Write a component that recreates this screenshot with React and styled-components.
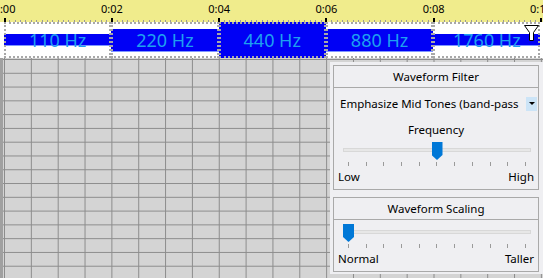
import styled, { createGlobalStyle } from "styled-components";

const TICK = 107.3;
const BLUE = "#0000f5";

const Global = createGlobalStyle`
  html, body {
    margin: 0;
    padding: 0;
  }
  body {
    font-family: "Noto Sans", "DejaVu Sans", sans-serif;
    background: #d4d4d4;
  }
`;

const Screen = styled.div`
  width: 543px;
  height: 278px;
  overflow: hidden;
  display: flex;
  flex-direction: column;
  background: #d4d4d4;
`;

const Ruler = styled.div`
  flex: 0 0 22px;
  display: flex;
  overflow: hidden;
  background:
    repeating-linear-gradient(to right, #9a9a9a 0 1px, transparent 1px ${TICK / 20}px) 4px 100% / 100% 2px no-repeat,
    #f0ec8c;
`;

const RulerTrack = styled.div`
  display: flex;
  margin-left: ${4.5 - TICK / 2}px;
`;

const Slot = styled.div`
  flex: 0 0 ${TICK}px;
  display: flex;
  flex-direction: column;
  align-items: center;
  justify-content: space-between;
`;

const TimeLabel = styled.span`
  font-size: 11px;
  line-height: 13px;
  padding-top: 2px;
  color: #000;
  white-space: nowrap;
`;

const MajorTick = styled.div`
  width: 2px;
  height: 4px;
  background: #000;
`;

const Bands = styled.div`
  flex: 0 0 36px;
  display: flex;
  padding-left: 4px;
  background: #fff;
  position: relative;
`;

const bandFill = (h) => {
  if (h >= 36) return BLUE;
  const top = `calc(50% + 0.5px - ${h / 2}px)`;
  const edge = `calc(50% + 0.5px + ${h / 2 - 1}px)`;
  const bottom = `calc(50% + 0.5px + ${h / 2}px)`;
  return `linear-gradient(to bottom, #fff ${top}, ${BLUE} ${top}, ${BLUE} ${edge}, #7f96ff ${edge}, #7f96ff ${bottom}, #fff ${bottom})`;
};

const Cell = styled.div`
  flex: 0 0 ${TICK}px;
  box-sizing: border-box;
  border: 2px dotted #a8a8a8;
  display: flex;
  align-items: center;
  justify-content: center;
  font-size: 18px;
  color: #1ea0f0;
  background: ${(p) => bandFill(p.$band)};
  background-origin: border-box;
`;

const Funnel = styled.svg`
  position: absolute;
  right: 4px;
  top: 3px;
`;

const Body = styled.div`
  flex: 1;
  display: flex;
  justify-content: flex-end;
  padding: 4px 0;
  border-left: 3px solid #a0a0a0;
  background-color: #d4d4d4;
  background-image:
    linear-gradient(to right, #8c8c8c 1px, transparent 1px),
    linear-gradient(to bottom, #8c8c8c 1px, transparent 1px);
  background-size: 26.85px 13.79px;
  background-position: 1px 1px;
`;

const Panel = styled.div`
  flex: 0 0 213px;
  width: 213px;
  min-width: 0;
  box-sizing: border-box;
  display: flex;
  flex-direction: column;
  gap: 7px;
  padding: 3px 4px 2px 3px;
  background: #efeff2;
  font-size: 11.5px;
  color: #000;
`;

const Group = styled.div`
  display: flex;
  flex-direction: column;
  min-width: 0;
  border: 1px solid #a9a9a9;
  ${(p) => (p.$grow ? "flex: 1;" : `flex: 0 0 ${p.$h}px; box-sizing: border-box;`)}
`;

const GroupTitle = styled.div`
  height: 21px;
  line-height: 21px;
  text-align: center;
  border-bottom: 1px solid #a9a9a9;
`;

const GroupBody = styled.div`
  display: flex;
  flex-direction: column;
  padding-top: ${(p) => p.$top || 0}px;
`;

const Select = styled.div`
  display: flex;
  align-items: center;
  height: 15px;
  margin-top: 8px;
  padding: 0 1px 0 6px;
  gap: 7px;
`;

const SelectText = styled.span`
  flex: 1;
  min-width: 0;
  overflow: hidden;
  white-space: nowrap;
  line-height: 15px;
`;

const ArrowBox = styled.div`
  flex: 0 0 11px;
  height: 14px;
  background: #cce4f7;
  display: flex;
  align-items: center;
  justify-content: center;

  &::after {
    content: "";
    border-left: 3px solid transparent;
    border-right: 3px solid transparent;
    border-top: 3px solid #000;
  }
`;

const Caption = styled.div`
  margin-top: 11px;
  line-height: 15px;
  text-align: center;
`;

const SliderWrap = styled.div`
  position: relative;
  height: 24px;
  margin: ${(p) => p.$top}px 7px 0 9px;
`;

const Track = styled.div`
  margin-top: 6px;
  height: 4px;
  box-sizing: border-box;
  background: #e7e7e7;
  border: 1px solid #d8d8d8;
`;

const TickRow = styled.div`
  margin-top: 10px;
  height: 4px;
  display: flex;
  justify-content: space-between;
  padding: 0 5px;
`;

const Tick = styled.span`
  width: 1px;
  height: 4px;
  background: #9a9a9a;
`;

const Thumb = styled.div`
  position: absolute;
  top: 0;
  left: calc(${(p) => p.$value} * (100% - 11px));
  width: 11px;
  height: 18px;
  background: #0078d7;
  clip-path: polygon(0 0, 100% 0, 100% 72%, 50% 100%, 0 72%);
`;

const Ends = styled.div`
  display: flex;
  justify-content: space-between;
  margin-top: 3px;
  padding: 0 4px;
  line-height: 15px;
`;

const times = ["0:00", "0:02", "0:04", "0:06", "0:08", "0:10"];
const bands = [
  { label: "110 Hz", h: 12 },
  { label: "220 Hz", h: 23 },
  { label: "440 Hz", h: 36 },
  { label: "880 Hz", h: 23 },
  { label: "1760 Hz", h: 12 },
];

function Slider({ value, top }) {
  return (
    <SliderWrap $top={top}>
      <Track />
      <TickRow>
        {Array.from({ length: 11 }, (_, i) => (
          <Tick key={i} />
        ))}
      </TickRow>
      <Thumb $value={value} />
    </SliderWrap>
  );
}

export default function App() {
  return (
    <Screen>
      <Global />
      <Ruler>
        <RulerTrack>
          {times.map((t) => (
            <Slot key={t}>
              <TimeLabel>{t}</TimeLabel>
              <MajorTick />
            </Slot>
          ))}
        </RulerTrack>
      </Ruler>
      <Bands>
        {bands.map((b) => (
          <Cell key={b.label} $band={b.h}>
            {b.label}
          </Cell>
        ))}
        <Funnel width="15" height="16" viewBox="0 0 15 16">
          <path
            d="M0.5 0.5 H14.5 L9.5 7.5 V15.5 H5.5 V7.5 Z"
            fill="#fff"
            stroke="#000"
            strokeWidth="1"
          />
        </Funnel>
      </Bands>
      <Body>
        <Panel>
          <Group $h={125}>
            <GroupTitle>Waveform Filter</GroupTitle>
            <GroupBody>
              <Select>
                <SelectText>Emphasize Mid Tones (band-pass)</SelectText>
                <ArrowBox />
              </Select>
              <Caption>Frequency</Caption>
              <Slider value={0.5} top={5} />
              <Ends>
                <span>Low</span>
                <span>High</span>
              </Ends>
            </GroupBody>
          </Group>
          <Group $grow>
            <GroupTitle>Waveform Scaling</GroupTitle>
            <GroupBody $top={4}>
              <Slider value={0} top={0} />
              <Ends>
                <span>Normal</span>
                <span>Taller</span>
              </Ends>
            </GroupBody>
          </Group>
        </Panel>
      </Body>
    </Screen>
  );
}
